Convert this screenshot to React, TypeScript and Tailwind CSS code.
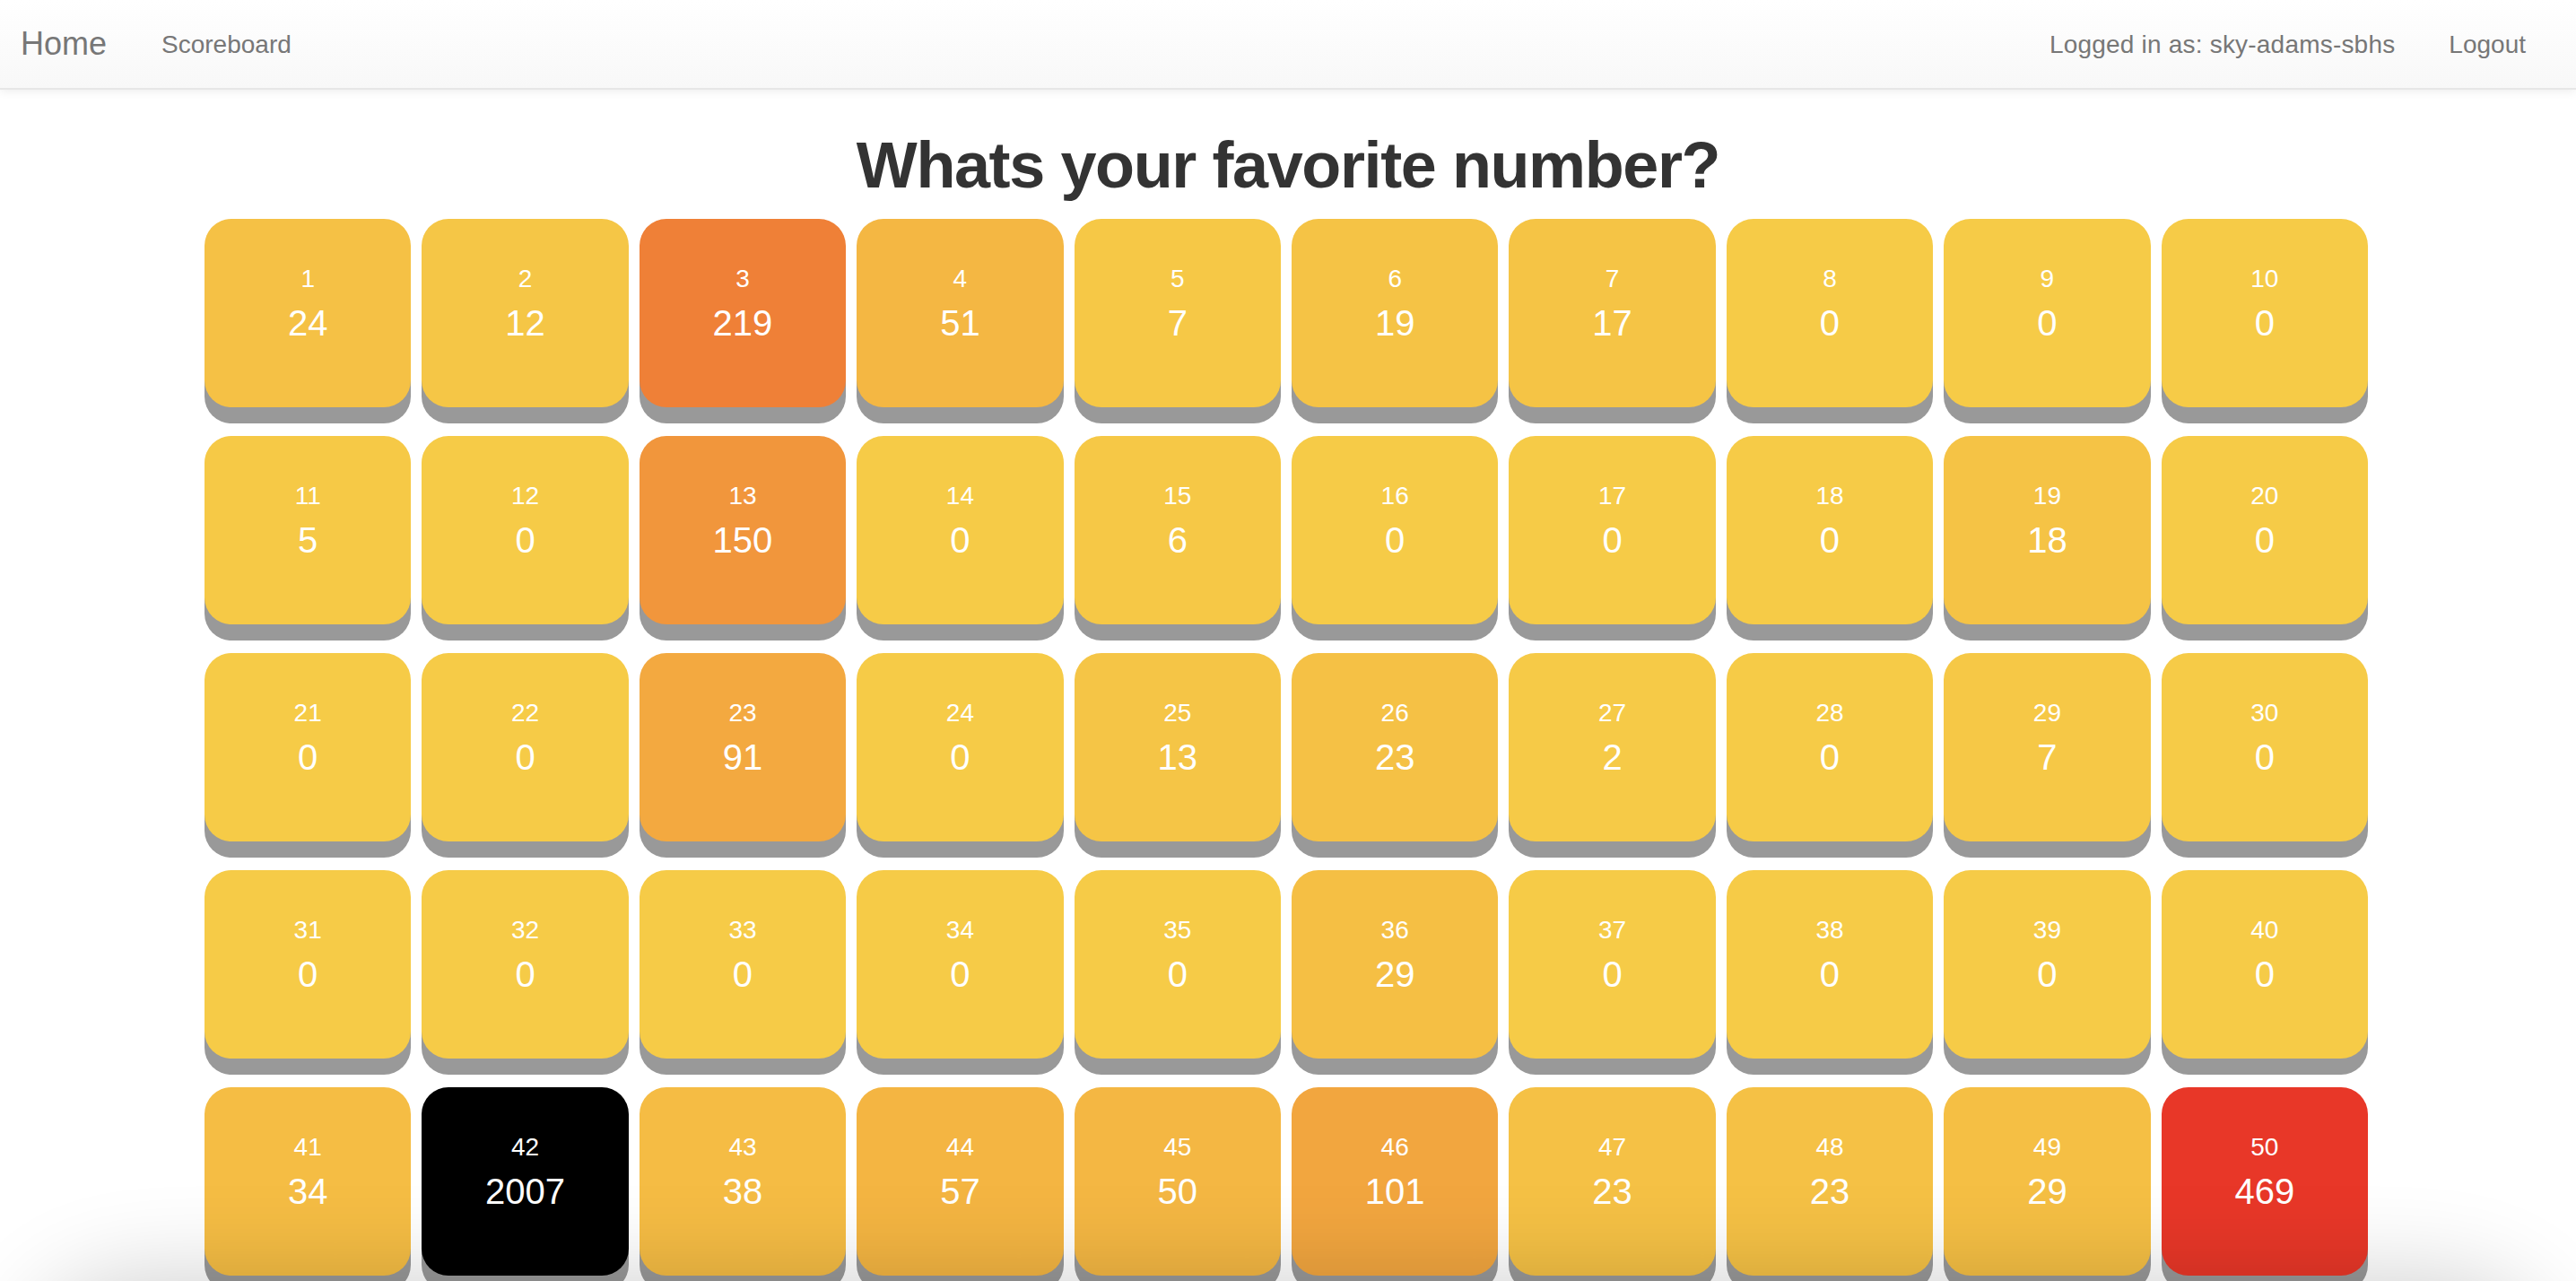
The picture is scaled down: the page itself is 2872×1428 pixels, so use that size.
import React from 'react'

const counts = [
  24, 12, 219, 51, 7, 19, 17, 0, 0, 0,
  5, 0, 150, 0, 6, 0, 0, 0, 18, 0,
  0, 0, 91, 0, 13, 23, 2, 0, 7, 0,
  0, 0, 0, 0, 0, 29, 0, 0, 0, 0,
  34, 2007, 38, 57, 50, 101, 23, 23, 29, 469,
]

const MAX = 469

// heat colour: yellow for nobody, red for the most picked
function heat(n: number, count: number) {
  if (n === 42) return '#000000'
  const t = Math.pow(Math.min(count / MAX, 1), 0.9)
  const from = [246, 203, 71]
  const to = [232, 55, 40]
  const c = from.map((v, i) => Math.round(v + (to[i] - v) * t))
  return `rgb(${c[0]}, ${c[1]}, ${c[2]})`
}

function Navbar() {
  return (
    <nav className="h-[100px] flex items-center justify-between bg-gradient-to-b from-white to-[#f8f8f8] border-b-2 border-[#e7e7e7] shadow-[0_2px_10px_rgba(0,0,0,0.075)] text-[#777]">
      <div className="flex items-center">
        <a className="ml-[23px] text-[36px] leading-none cursor-pointer">Home</a>
        <a className="ml-[61px] mt-[2px] text-[28px] leading-none cursor-pointer">Scoreboard</a>
      </div>
      <div className="flex items-center mr-[56px]">
        <span className="mt-[2px] text-[28px] leading-none tracking-[0.2px]">Logged in as: sky-adams-sbhs</span>
        <a className="ml-[60px] mt-[2px] text-[28px] leading-none cursor-pointer">Logout</a>
      </div>
    </nav>
  )
}

function Tile({ n, count }: { n: number; count: number }) {
  return (
    <div
      className="h-[210px] rounded-[30px] shadow-[0_18px_0_0_#999] text-white text-center pt-[47px] cursor-pointer"
      style={{ backgroundColor: heat(n, count) }}
    >
      <div className="text-[28px] leading-[40px]">{n}</div>
      <div className="mt-[7px] text-[40px] leading-[44px]">{count}</div>
    </div>
  )
}

export default function App() {
  return (
    <div className="min-h-screen bg-white font-['Liberation_Sans',Arial,sans-serif]">
      <Navbar />
      <main>
        <h1 className="mt-[44px] text-center text-[72px] leading-[80px] font-bold tracking-[-1.4px] text-[#333]">
          Whats your favorite number?
        </h1>
        <div className="w-[2416px] mx-auto pr-1 mt-[20px]">
          <div className="grid grid-cols-10 gap-x-[12px] gap-y-[32px]">
            {counts.map((c, i) => (
              <Tile key={i} n={i + 1} count={c} />
            ))}
          </div>
        </div>
      </main>
      {/* shadow creeping up from below the window */}
      <div className="fixed left-[30px] right-[30px] top-full h-[300px] rounded-[120px] shadow-[0_0_110px_rgba(0,0,0,0.2)] pointer-events-none" />
    </div>
  )
}
